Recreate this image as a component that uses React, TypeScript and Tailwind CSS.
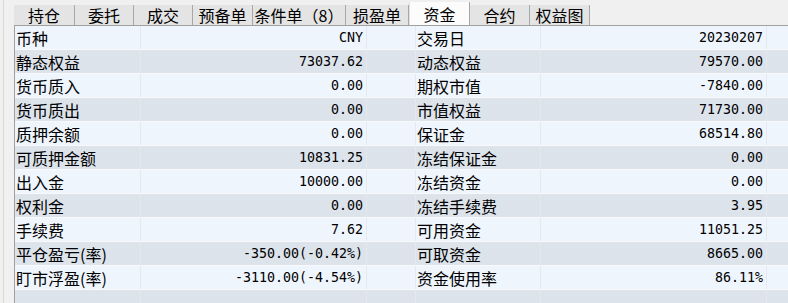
import React from 'react'

const tabs = [
  { name: '持仓', w: 'w-[61px]' },
  { name: '委托', w: 'w-[59px]' },
  { name: '成交', w: 'w-[59px]' },
  { name: '预备单', w: 'w-[60px]' },
  { name: '条件单（8）', w: 'w-[93px]' },
  { name: '损盈单', w: 'w-[63px]' },
  { name: '资金', w: 'w-[61px]', active: true },
  { name: '合约', w: 'w-[60px]' },
  { name: '权益图', w: 'w-[60px]' },
]

const rows: [string, string, string, string][] = [
  ['币种', 'CNY', '交易日', '20230207'],
  ['静态权益', '73037.62', '动态权益', '79570.00'],
  ['货币质入', '0.00', '期权市值', '-7840.00'],
  ['货币质出', '0.00', '市值权益', '71730.00'],
  ['质押余额', '0.00', '保证金', '68514.80'],
  ['可质押金额', '10831.25', '冻结保证金', '0.00'],
  ['出入金', '10000.00', '冻结资金', '0.00'],
  ['权利金', '0.00', '冻结手续费', '3.95'],
  ['手续费', '7.62', '可用资金', '11051.25'],
  ['平仓盈亏(率)', '-350.00(-0.42%)', '可取资金', '8665.00'],
  ['盯市浮盈(率)', '-3110.00(-4.54%)', '资金使用率', '86.11%'],
  ['', '', '', ''],
]

const cjk = { fontFamily: '"Noto Sans CJK SC", "Noto Sans", sans-serif' }
const mono = { fontFamily: '"DejaVu Sans Mono", "Liberation Mono", monospace' }

export default function App() {
  return (
    <div className="w-[788px] h-[303px] bg-[#f0f0f0] flex overflow-hidden text-black" style={cjk}>
      {/* left splitter strip */}
      <div className="w-[14px] shrink-0 flex">
        <div className="w-[3px]" />
        <div className="w-px bg-[#d9d9d9]" />
      </div>

      <div className="flex-1 flex flex-col min-w-0">
        {/* tab bar */}
        <div className="h-[25px] shrink-0 flex items-end">
          {tabs.map(t => (
            <div
              key={t.name}
              className={`${t.w} shrink-0 flex items-center justify-center text-[16px] leading-none border-r border-[#a8a8a8] ${
                t.active ? 'h-[23px] bg-[#fcfcfc] border-l border-l-[#e0e0e0]' : 'h-[20px] bg-[#e4e4e4]'
              }`}
            >
              {t.name}
            </div>
          ))}
        </div>

        {/* fund table */}
        <div className="flex-1 border-t border-l border-[#a0a0a0] overflow-hidden">
          {rows.map((r, i) => (
            <div
              key={i}
              className={`h-[24px] flex border-b border-[#f7f9fc] ${i % 2 === 0 ? 'bg-[#eff5fd]' : 'bg-[#dce3eb]'}`}
            >
              <div className="w-[126px] shrink-0 flex items-center pl-px text-[16px] border-r border-[#e4e9ef] whitespace-nowrap">
                {r[0]}
              </div>
              <div
                className="w-[226px] shrink-0 flex items-center justify-end pr-[3px] text-[13.3px] border-r border-[#e4e9ef] whitespace-nowrap"
                style={mono}
              >
                {r[1]}
              </div>
              <div className="w-[49px] shrink-0 border-r border-[#e4e9ef]" />
              <div className="w-[125px] shrink-0 flex items-center pl-px text-[16px] border-r border-[#e4e9ef] whitespace-nowrap">
                {r[2]}
              </div>
              <div
                className="w-[226px] shrink-0 flex items-center justify-end pr-[3px] text-[13.3px] border-r border-[#e4e9ef] whitespace-nowrap"
                style={mono}
              >
                {r[3]}
              </div>
              <div className="flex-1" />
            </div>
          ))}
        </div>
      </div>
    </div>
  )
}
